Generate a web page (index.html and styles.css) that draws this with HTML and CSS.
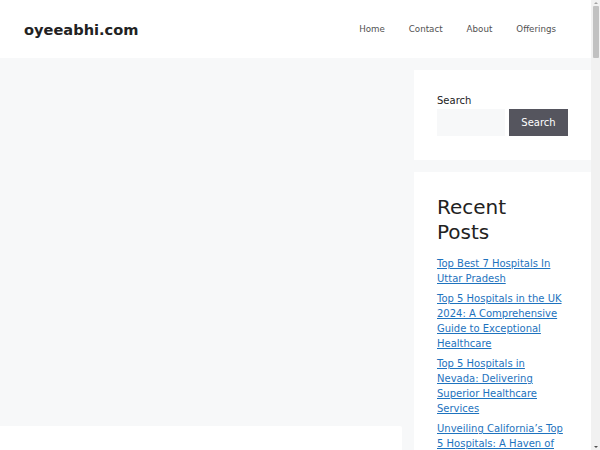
FILE: index.html
```html
<!DOCTYPE html>
<html lang="en">
<head>
    <meta charset="UTF-8">
    <meta name="viewport" content="width=device-width, initial-scale=1.0">
    <title>oyeeabhi.com</title>
    <link rel="stylesheet" href="styles.css">
</head>
<body>
    <header class="site-header">
        <div class="site-title">oyeeabhi.com</div>
        <nav class="main-nav">
            <a href="#">Home</a>
            <a href="#">Contact</a>
            <a href="#">About</a>
            <a href="#">Offerings</a>
        </nav>
    </header>

    <div class="site-content">
        <main class="content-area">
            <div class="featured"></div>
            <article class="inside-article"></article>
        </main>

        <aside class="sidebar">
            <div class="widget">
                <label class="search-label" for="s">Search</label>
                <form class="search-form">
                    <input type="search" id="s" class="search-field">
                    <button type="button" class="search-btn">Search</button>
                </form>
            </div>

            <div class="widget">
                <h2 class="widget-title">Recent Posts</h2>
                <ul class="recent-posts">
                    <li><a href="#">Top Best 7 Hospitals In Uttar Pradesh</a></li>
                    <li><a href="#">Top 5 Hospitals in the UK 2024: A Comprehensive Guide to Exceptional Healthcare</a></li>
                    <li><a href="#">Top 5 Hospitals in Nevada: Delivering Superior Healthcare Services</a></li>
                    <li><a href="#">Unveiling California’s Top 5 Hospitals: A Haven of Healthcare Excellence</a></li>
                    <li><a href="#">Best Hospitals in Texas: A Guide to Top Medical Care</a></li>
                </ul>
            </div>
        </aside>
    </div>

    <!-- fake window scrollbar -->
    <div class="scrollbar">
        <span class="arrow up"></span>
        <span class="thumb"></span>
        <span class="arrow down"></span>
    </div>
</body>
</html>
```

FILE: styles.css
```css
body {
    margin: 0;
    padding-right: 9px;
    background: #f7f8f9;
    font-family: "DejaVu Sans", sans-serif;
    color: #222;
}
.site-header {
    background: white;
    height: 58px;
    display: flex;
    align-items: center;
    justify-content: space-between;
    padding: 0 23px 0 24px;
}
.site-title {
    font-size: 14.6px;
    font-weight: bold;
    color: #222;
}
.main-nav {
    display: flex;
}
.main-nav a {
    font-size: 8.7px;
    color: #515151;
    text-decoration: none;
    padding: 0 12px;
}
.site-content {
    display: flex;
    gap: 12px;
    padding-top: 12px;
}
.content-area {
    flex: 1;
}
.featured {
    height: 344px;
}
.inside-article {
    background: white;
    height: 400px;
    margin-top: 12px;
    border-top-right-radius: 2px;
}
.sidebar {
    width: 177px;
}
.widget {
    background: white;
    padding: 23px 23px 24px 23px;
    margin-bottom: 12px;
    font-size: 10px;
    line-height: 15px;
}
.search-label {
    display: block;
    color: #222;
}
.search-form {
    display: flex;
    gap: 4px;
    margin-top: 1px;
}
.search-field {
    width: 68px;
    height: 27px;
    box-sizing: border-box;
    border: none;
    background: #f7f8f9;
    padding: 0;
}
.search-btn {
    width: 59px;
    height: 27px;
    border: none;
    background: #55555e;
    color: white;
    font-family: "DejaVu Sans", sans-serif;
    font-size: 10px;
    padding: 0;
}
.widget-title {
    width: 110px;
    font-size: 20px;
    font-weight: normal;
    line-height: 25px;
    margin: 0 0 11px 0;
}
.recent-posts {
    list-style: none;
    margin: 0;
    padding: 0;
}
.recent-posts li {
    margin-bottom: 5px;
}
.recent-posts a {
    color: #1e73be;
}
.scrollbar {
    position: fixed;
    top: 0;
    right: 0;
    width: 9px;
    height: 100%;
    background: #f1f1f1;
    display: flex;
    flex-direction: column;
    align-items: center;
}
.thumb {
    width: 6px;
    height: 52px;
    background: #c1c1c1;
    border-radius: 1px;
}
.arrow {
    width: 0;
    height: 0;
    border-left: 2px solid transparent;
    border-right: 2px solid transparent;
    margin: 2px 0;
}
.arrow.up {
    border-bottom: 2px solid #a3a3a3;
}
.arrow.down {
    border-top: 2px solid #505050;
    margin-top: auto;
}
```
